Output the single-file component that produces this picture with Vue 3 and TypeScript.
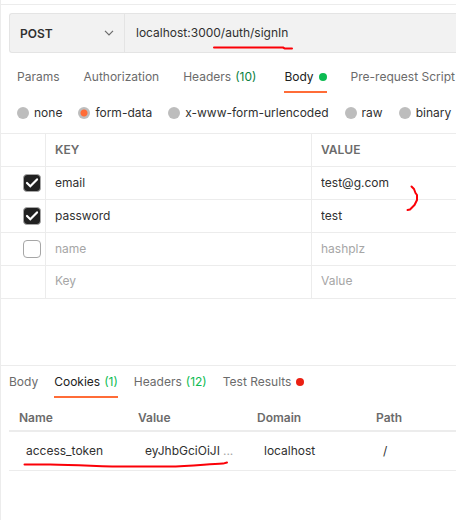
<script setup lang="ts">
import { ref } from 'vue'

interface Tab {
  id: string
  label: string
  count?: number
  dot?: 'green' | 'red'
}

interface Field {
  enabled: boolean
  key: string
  value: string
}

interface Cookie {
  name: string
  value: string
  domain: string
  path: string
}

const methods: string[] = ['GET', 'POST', 'PUT', 'PATCH', 'DELETE']
const method = ref('POST')
const url = ref('localhost:3000/auth/signIn')

const requestTabs: Tab[] = [
  { id: 'params', label: 'Params' },
  { id: 'auth', label: 'Authorization' },
  { id: 'headers', label: 'Headers', count: 10 },
  { id: 'body', label: 'Body', dot: 'green' },
  { id: 'pre', label: 'Pre-request Script' },
]
const requestTab = ref('body')

const bodyTypes: string[] = ['none', 'form-data', 'x-www-form-urlencoded', 'raw', 'binary']
const bodyType = ref('form-data')

const fields = ref<Field[]>([
  { enabled: true, key: 'email', value: 'test@g.com' },
  { enabled: true, key: 'password', value: 'test' },
  { enabled: false, key: 'name', value: 'hashplz' },
])
const draft = ref({ key: '', value: '' })

const responseTabs: Tab[] = [
  { id: 'body', label: 'Body' },
  { id: 'cookies', label: 'Cookies', count: 1 },
  { id: 'headers', label: 'Headers', count: 12 },
  { id: 'tests', label: 'Test Results', dot: 'red' },
]
const responseTab = ref('cookies')

const cookies: Cookie[] = [
  { name: 'access_token', value: 'eyJhbGciOiJI', domain: 'localhost', path: '/' },
]
</script>

<template>
  <main class="client">
    <section class="request">
      <form class="request-bar" @submit.prevent>
        <div class="method">
          <select v-model="method" class="method-select" aria-label="HTTP method">
            <option v-for="m in methods" :key="m">{{ m }}</option>
          </select>
          <svg class="chevron" viewBox="0 0 10 6" aria-hidden="true">
            <path d="M1 0.8 L5 4.8 L9 0.8" />
          </svg>
        </div>
        <div class="url">
          <input v-model="url" class="url-input" type="text" aria-label="Request URL" />
          <svg class="mark url-mark" viewBox="0 0 80 4" aria-hidden="true">
            <path d="M1 1.5 H56 L70 1.5 L72 2.6 H79" />
          </svg>
        </div>
      </form>

      <nav class="tabs request-tabs" aria-label="Request">
        <button
          v-for="tab in requestTabs"
          :key="tab.id"
          type="button"
          class="tab"
          :class="{ active: tab.id === requestTab, counted: tab.count }"
          @click="requestTab = tab.id"
        >
          <span>{{ tab.label }}</span>
          <span v-if="tab.count" class="count">({{ tab.count }})</span>
          <span v-if="tab.dot" class="dot" :class="tab.dot"></span>
        </button>
      </nav>

      <div class="body-types" role="radiogroup" aria-label="Body type">
        <label v-for="type in bodyTypes" :key="type" class="body-type">
          <input v-model="bodyType" class="radio" type="radio" name="body-type" :value="type" />
          <span>{{ type }}</span>
        </label>
      </div>

      <div class="fields-wrap">
        <table class="fields">
          <thead>
            <tr>
              <th class="check-col"></th>
              <th class="key-col">KEY</th>
              <th>VALUE</th>
            </tr>
          </thead>
          <tbody>
            <tr v-for="(field, i) in fields" :key="i" :class="{ disabled: !field.enabled }">
              <td class="check-cell">
                <label class="check">
                  <input v-model="field.enabled" type="checkbox" :aria-label="field.key" />
                  <svg v-if="field.enabled" viewBox="0 0 18 18" aria-hidden="true">
                    <path d="M4 9 L7.3 12.2 L14 5.4" />
                  </svg>
                </label>
              </td>
              <td><input v-model="field.key" class="cell-input" type="text" aria-label="Key" /></td>
              <td><input v-model="field.value" class="cell-input" type="text" aria-label="Value" /></td>
            </tr>
            <tr class="draft">
              <td></td>
              <td><input v-model="draft.key" class="cell-input" type="text" placeholder="Key" aria-label="Key" /></td>
              <td><input v-model="draft.value" class="cell-input" type="text" placeholder="Value" aria-label="Value" /></td>
            </tr>
          </tbody>
        </table>
        <svg class="mark fields-mark" viewBox="0 0 14 27" aria-hidden="true">
          <path d="M5.5 1.5 L8 4 L9.5 8 L11 10 V15 L8.5 20 L4 24.5 L1.5 25" />
        </svg>
      </div>
    </section>

    <section class="response">
      <nav class="tabs response-tabs" aria-label="Response">
        <button
          v-for="tab in responseTabs"
          :key="tab.id"
          type="button"
          class="tab"
          :class="{ active: tab.id === responseTab }"
          @click="responseTab = tab.id"
        >
          <span>{{ tab.label }}</span>
          <span v-if="tab.count" class="count">({{ tab.count }})</span>
          <span v-if="tab.dot" class="dot" :class="tab.dot"></span>
        </button>
      </nav>

      <div class="cookies-wrap">
        <table class="cookies">
          <thead>
            <tr>
              <th>Name</th>
              <th>Value</th>
              <th>Domain</th>
              <th class="path-col">Path</th>
            </tr>
          </thead>
          <tbody>
            <tr v-for="cookie in cookies" :key="cookie.name">
              <td>{{ cookie.name }}</td>
              <td>
                <span class="clipped">{{ cookie.value }}<span class="more">...</span></span>
              </td>
              <td>{{ cookie.domain }}</td>
              <td>{{ cookie.path }}</td>
            </tr>
          </tbody>
        </table>
        <svg class="mark cookies-mark" viewBox="0 0 206 8" aria-hidden="true">
          <path d="M1.5 3.5 H27 C60 4 80 5.5 105 5.6 H145 C170 5.2 185 3 200 2.6 L204 1.5" />
        </svg>
      </div>
    </section>
  </main>
</template>

<style>
body {
  margin: 0;
  background: #fff;
}
</style>

<style scoped>
.client {
  box-sizing: border-box;
  min-height: 100vh;
  overflow: hidden;
  border-left: 1px solid #ececec;
  padding-top: 4px;
  font-family: Inter, "Liberation Sans", sans-serif;
  font-size: 12px;
  line-height: 16px;
  color: #303030;
}

button,
input,
select {
  font: inherit;
  color: inherit;
}

.request {
  border-top: 1px solid #ececec;
  padding-top: 8px;
}

.request-bar {
  display: flex;
  height: 38px;
  margin-left: 8px;
  border: 1px solid #e4e4e4;
  border-right: 0;
  border-radius: 3px 0 0 3px;
  background: #f2f2f2;
}

.method {
  display: flex;
  align-items: center;
  flex: none;
  width: 114px;
  border-right: 1px solid #e4e4e4;
}

.method-select {
  appearance: none;
  width: 100%;
  height: 100%;
  margin: 0 -20px 0 0;
  padding: 2px 20px 0 10px;
  border: 0;
  background: transparent;
  font-weight: 600;
  outline: none;
}

.chevron {
  flex: none;
  width: 10px;
  height: 6px;
  fill: none;
  stroke: #6b6b6b;
  stroke-width: 1.2;
  pointer-events: none;
}

.url {
  position: relative;
  flex: 1;
  min-width: 0;
}

.url-input {
  box-sizing: border-box;
  width: 100%;
  height: 100%;
  padding: 0 11px 2px;
  border: 0;
  background: transparent;
  outline: none;
}

.mark {
  position: absolute;
  fill: none;
  stroke: #fb0007;
  stroke-width: 2;
  stroke-linecap: round;
  stroke-linejoin: round;
  pointer-events: none;
}

.url-mark {
  left: 88px;
  bottom: 2px;
  width: 80px;
  height: 4px;
}

.tabs {
  display: flex;
  white-space: nowrap;
}

.tab {
  display: flex;
  align-items: center;
  flex: none;
  gap: 4px;
  padding: 0;
  border: 0;
  border-bottom: 2px solid transparent;
  background: transparent;
  color: #6b6b6b;
  cursor: pointer;
}

.tab.active {
  border-bottom-color: #ff6c37;
  color: #212121;
}

.request-tabs {
  gap: 24px;
  height: 30px;
  margin-top: 10px;
  padding-left: 16px;
}

.request-tabs .tab {
  padding-bottom: 1px;
}

.request-tabs .counted {
  margin-right: 4px;
}

.count {
  color: #0a7f3f;
}

.response .count {
  color: #0cbb52;
}

.dot {
  width: 8px;
  height: 8px;
  margin-left: 1px;
  border-radius: 50%;
}

.dot.green {
  background: #0cbb52;
}

.dot.red {
  background: #eb2013;
}

.body-types {
  display: flex;
  align-items: center;
  gap: 16px;
  height: 40px;
  padding-left: 16px;
  white-space: nowrap;
}

.body-type {
  display: flex;
  align-items: center;
  gap: 5px;
}

.radio {
  appearance: none;
  width: 12px;
  height: 12px;
  margin: 0;
  border-radius: 50%;
  background: #bdbdbd;
}

.radio:checked {
  background: radial-gradient(circle, #ff6c37 3px, #bdbdbd 4px);
}

.fields-wrap,
.cookies-wrap {
  position: relative;
}

table {
  width: 100%;
  border-collapse: separate;
  border-spacing: 0;
  table-layout: fixed;
}

th,
td {
  box-sizing: border-box;
  text-align: left;
}

.fields th,
.fields td {
  height: 33px;
  padding: 0 9px;
  border-bottom: 1px solid #ececec;
}

.fields th {
  height: 34px;
  border-top: 1px solid #ececec;
  color: #6b6b6b;
  font-weight: 600;
}

.fields th:not(:last-child),
.fields td:not(:last-child) {
  border-right: 1px solid #ececec;
}

.check-col {
  width: 45px;
}

.key-col {
  width: 266px;
}

.fields .check-cell {
  padding: 0 4px 0 22px;
}

.check {
  display: grid;
  width: 18px;
  height: 18px;
}

.check input,
.check svg {
  grid-area: 1 / 1;
}

.check input {
  appearance: none;
  box-sizing: border-box;
  width: 18px;
  height: 18px;
  margin: 0;
  border: 1px solid #a6a6a6;
  border-radius: 4px;
}

.check input:checked {
  background: #212121;
}

.check svg {
  fill: none;
  stroke: #fff;
  stroke-width: 2.2;
  stroke-linecap: round;
  pointer-events: none;
}

.cell-input {
  display: block;
  box-sizing: border-box;
  width: 100%;
  padding: 0;
  border: 0;
  background: transparent;
  outline: none;
}

.disabled .cell-input,
.cell-input::placeholder {
  color: #a6a6a6;
  opacity: 1;
}

.fields .draft td {
  padding-bottom: 2px;
}

.fields-mark {
  left: 405px;
  top: 52px;
  width: 14px;
  height: 27px;
}

.response {
  margin-top: 66px;
  border-top: 1px solid #ececec;
}

.response-tabs {
  gap: 16px;
  height: 32px;
  padding-left: 8px;
}

.response-tabs .tab {
  padding-top: 2px;
}

.cookies-wrap {
  margin-left: 8px;
}

.cookies th {
  width: 119px;
  height: 34px;
  padding: 8px 10px 0;
  border-bottom: 2px solid #ececec;
  color: #6b6b6b;
  font-weight: 600;
}

.cookies .path-col {
  width: auto;
}

.cookies td {
  height: 39px;
  padding: 0 17px;
  border-bottom: 1px solid #ececec;
  white-space: nowrap;
}

.clipped {
  display: flex;
  gap: 3px;
}

.more {
  color: #a6a6a6;
}

.cookies-mark {
  left: 14px;
  top: 63px;
  width: 206px;
  height: 8px;
}
</style>
